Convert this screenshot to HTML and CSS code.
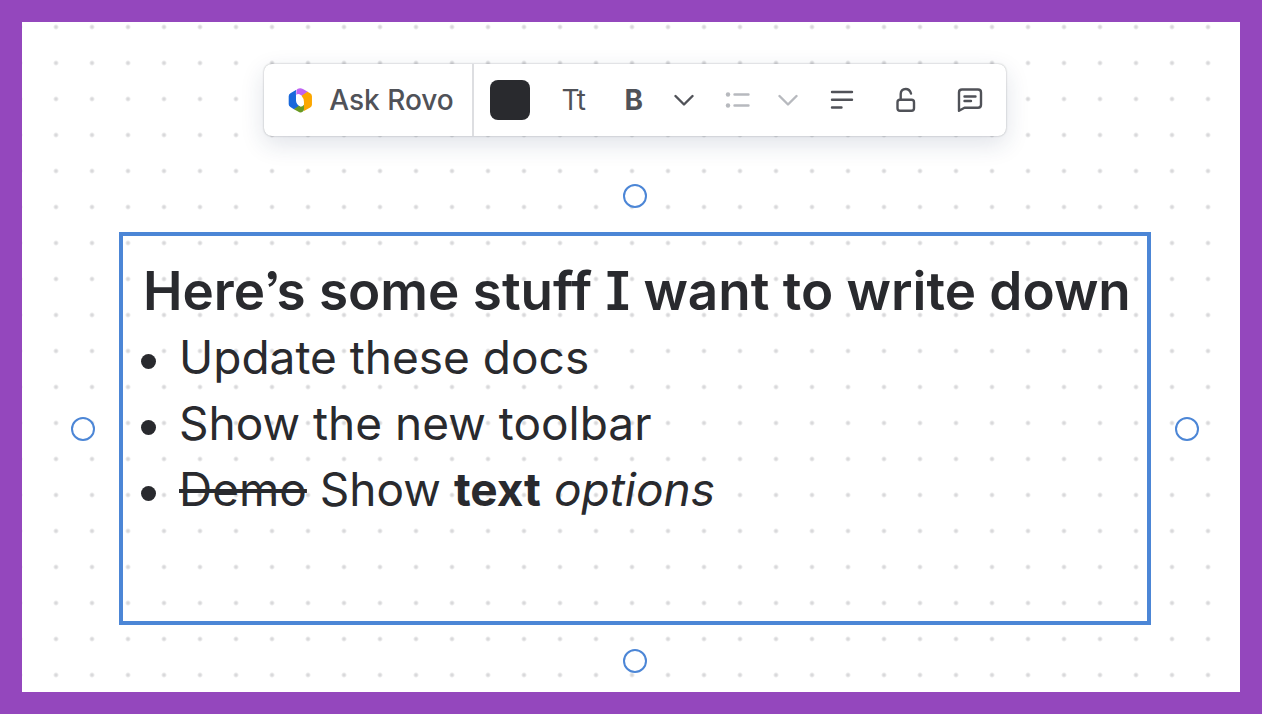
FILE: index.html
```
<!DOCTYPE html>
<html lang="en">
<head>
    <meta charset="UTF-8">
    <meta name="viewport" content="width=device-width, initial-scale=1.0">
    <title>Whiteboard</title>
    <link rel="stylesheet" href="styles.css">
</head>
<body>
    <main class="canvas">
        <div class="toolbar" role="toolbar" aria-label="Text options">
            <button type="button" class="ask-button">
                <svg class="logo" viewBox="0 0 72 72" aria-hidden="true">
                    <path fill="#1868db" d="M24 5 L7 15 Q2 18 2 24 V47 Q2 52 7 55 L17 61 L36 54 Q23 47 23 36 V20 Q22 10 24 5Z"/>
                    <path fill="#bf63f3" d="M27 3 Q35 -2 43 3 L57 11 L43 24 L33 18 Q27 16 24 20 V12 Q24 6 27 3Z"/>
                    <path fill="#fca700" d="M56 11 L64 15 Q69 18 69 24 V48 Q69 53 64 56 L46 66 Q46 62 46 54 V40 Q46 30 39 22Z"/>
                    <path fill="#6a9a23" d="M17 61 L31 51 L36 54 Q42 53 46 48 V58 Q47 64 43 68 Q36 73 29 68Z"/>
                </svg>
                <span>Ask Rovo</span>
            </button>
            <div class="tools">
                <button type="button" class="swatch" aria-label="Text color"></button>
                <button type="button" class="tool tool-size" aria-label="Text size">Tt</button>
                <div class="tool-group">
                    <button type="button" class="tool tool-bold" aria-label="Bold">B</button>
                    <button type="button" class="tool tool-more" aria-label="More formatting">
                        <svg viewBox="0 0 20 32" width="20" height="32"><path d="M1.500 12l8.500 8.500 8.500-8.500"/></svg>
                    </button>
                </div>
                <div class="tool-group muted">
                    <button type="button" class="tool" aria-label="Bulleted list">
                        <svg viewBox="0 0 32 32" width="32" height="32">
                            <path d="M12.500 10.500h14M12.500 21.500h14"/>
                            <circle class="dot" cx="6" cy="10.500" r="2.200"/>
                            <circle class="dot" cx="6" cy="21.500" r="2.200"/>
                        </svg>
                    </button>
                    <button type="button" class="tool tool-more" aria-label="More lists">
                        <svg viewBox="0 0 20 32" width="20" height="32"><path d="M1.500 12l8.500 8.500 8.500-8.500"/></svg>
                    </button>
                </div>
                <div class="tool-group wide">
                    <button type="button" class="tool" aria-label="Align text">
                        <svg viewBox="0 0 32 32" width="32" height="32">
                            <path d="M6 8h20M6 15.700h20M6 23.500h9.500"/>
                        </svg>
                    </button>
                    <button type="button" class="tool" aria-label="Lock">
                        <svg viewBox="0 0 32 32" width="32" height="32">
                            <rect x="7.500" y="15.700" width="16.500" height="11" rx="2.500"/>
                            <path d="M10.700 15.700V10q0-5 5-5 4 0 5.300 4.500"/>
                        </svg>
                    </button>
                    <button type="button" class="tool" aria-label="Comment">
                        <svg viewBox="0 0 32 32" width="32" height="32">
                            <path d="M5 26.800V8.500Q5 5.500 8 5.500H24Q27 5.500 27 8.500V20.700Q27 23.700 24 23.700H10.500Z"/>
                            <path d="M10.500 12.500h11M10.500 17h6.500"/>
                        </svg>
                    </button>
                </div>
            </div>
        </div>

        <section class="text-box">
            <h1>Here’s some stuff I want to write down</h1>
            <ul>
                <li>Update these docs</li>
                <li>Show the new toolbar</li>
                <li><s>Demo</s> Show <strong>text</strong> <em>options</em></li>
            </ul>
            <span class="handle top"></span>
            <span class="handle right"></span>
            <span class="handle bottom"></span>
            <span class="handle left"></span>
        </section>
    </main>
</body>
</html>
```
FILE: styles.css
```
* {
    box-sizing: border-box;
}

body {
    margin: 0;
    min-height: 100vh;
    padding: 22px;
    display: flex;
    background: #9447bd;
    color: #292a2e;
    font-family: Inter, "Liberation Sans", sans-serif;
}

/* Dotted board */
.canvas {
    flex: 1;
    min-width: 0;
    display: flex;
    flex-direction: column;
    align-items: center;
    gap: 96px;
    padding: 42px 89px 67px 97px;
    background-color: #fff;
    background-image: radial-gradient(circle, #d9d9db 1px, transparent 3px);
    background-size: 36px 36px;
    background-position: 16px 23px;
}

/* Toolbar */
.toolbar {
    display: flex;
    height: 72px;
    background: #fff;
    border-radius: 8px;
    box-shadow: 0 0 2px rgba(30, 31, 33, 0.35), 0 8px 24px rgba(30, 50, 90, 0.14);
}

.toolbar button {
    border: 0;
    padding: 0;
    background: none;
    color: #505258;
    font-family: inherit;
    cursor: pointer;
}

.toolbar .ask-button {
    display: flex;
    align-items: center;
    gap: 16px;
    padding: 0 18px 0 24px;
    border-right: 2px solid #dddee1;
    font-size: 28px;
    font-weight: 500;
}

.logo {
    width: 25px;
    height: 25px;
}

.tools {
    display: flex;
    align-items: center;
    gap: 28px;
    padding: 0 20px 0 16px;
}

.toolbar .swatch {
    width: 40px;
    height: 40px;
    border-radius: 8px;
    background: #292a2e;
}

.tool-group {
    display: flex;
    gap: 24px;
}

.tool-group.wide {
    gap: 32px;
}

.toolbar .tool {
    display: flex;
    align-items: center;
    justify-content: center;
    width: 32px;
    height: 32px;
}

.toolbar .tool-more {
    width: 20px;
}

.toolbar .tool-size {
    font-size: 28px;
    font-weight: 400;
}

.toolbar .tool-bold {
    font-size: 28px;
    font-weight: 700;
}

.tool svg {
    fill: none;
    stroke: #505258;
    stroke-width: 2.4;
    stroke-linecap: round;
    stroke-linejoin: round;
}

.muted svg {
    stroke: #b7b9be;
}

.muted .dot {
    fill: #b7b9be;
    stroke: none;
}

/* Selected text box */
.text-box {
    position: relative;
    flex: 1;
    align-self: stretch;
    padding: 22px 20px;
    border: 4px solid #4c86d6;
}

.text-box h1 {
    margin: 0;
    font-size: 53px;
    font-weight: 600;
    line-height: 66px;
    white-space: nowrap;
    font-feature-settings: "cv08", "ss03";
}

.text-box ul {
    margin: 0;
    padding: 0;
    list-style: none;
    font-size: 46px;
    line-height: 66px;
}

.text-box li::before {
    content: "";
    display: inline-block;
    width: 15px;
    height: 15px;
    margin: 0 23px 0 -2px;
    border-radius: 50%;
    background: #292a2e;
    vertical-align: middle;
}

/* Connection handles around the box */
.handle {
    position: absolute;
    width: 24px;
    height: 24px;
    border: 2px solid #4c86d6;
    border-radius: 50%;
    background: #fff;
}

.top,
.bottom {
    left: calc(50% - 12px);
}

.left,
.right {
    top: calc(50% - 12px);
}

.top {
    top: -52px;
}

.bottom {
    bottom: -52px;
}

.left {
    left: -52px;
}

.right {
    right: -52px;
}
```
